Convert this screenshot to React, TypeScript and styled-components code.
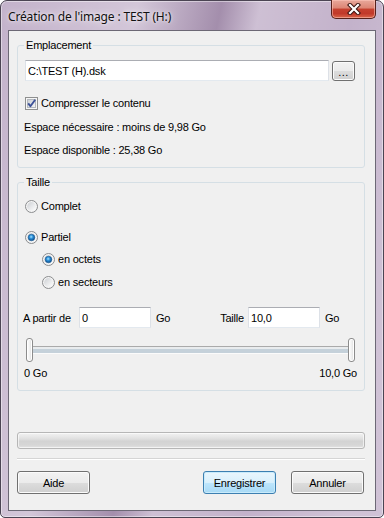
import React from "react";
import styled, { createGlobalStyle } from "styled-components";

const GlobalStyle = createGlobalStyle`
  html, body { margin: 0; padding: 0; background: #ffffff; }
  body { font-family: "Liberation Sans", Arial, sans-serif; font-size: 11px; letter-spacing: -0.2px; color: #000; }
  * { box-sizing: border-box; }
`;

const Window = styled.div`
  width: 384px;
  height: 518px;
  border: 1px solid #4b4453;
  border-radius: 7px 7px 5px 5px;
  background:
    linear-gradient(102deg, rgba(255,255,255,0.05) 0%, rgba(255,255,255,0.3) 28%, rgba(90,60,100,0.28) 45%, rgba(255,255,255,0.22) 53%, rgba(255,255,255,0.05) 72%, rgba(255,255,255,0.25) 92%),
    #c0aec8;
  box-shadow: inset 0 0 0 1px rgba(255,255,255,0.45);
  padding: 0 7px 6px 7px;
  display: flex;
  flex-direction: column;
`;

const TitleBar = styled.div`
  height: 29px;
  display: flex;
  align-items: flex-start;
`;

const Title = styled.div`
  align-self: center;
  font-family: "Noto Sans", "Open Sans", sans-serif;
  font-size: 12px;
  letter-spacing: -0.15px;
  color: #111;
  text-shadow: 0 0 8px rgba(255,255,255,0.95), 0 0 3px rgba(255,255,255,0.8);
  margin-top: 1px;
`;

const Spacer = styled.div`
  flex: 1;
`;

const CloseButton = styled.div`
  width: 45px;
  height: 19px;
  margin-top: -1px;
  border: 1px solid #56211b;
  border-top: none;
  border-radius: 0 0 5px 5px;
  background: linear-gradient(to bottom, #e8a89b 0%, #dc8574 45%, #c5412f 50%, #c1392a 75%, #d9654a 100%);
  box-shadow: inset 0 0 0 1px rgba(255,200,190,0.55);
  display: flex;
  align-items: center;
  justify-content: center;
`;

const Client = styled.div`
  height: 481px;
  border: 1px solid #6c6875;
  background: #f0f0f0;
  padding: 0 10px 0 8px;
  display: flex;
  flex-direction: column;
`;

const Group = styled.fieldset<{ $mt: number }>`
  margin: ${(p) => p.$mt}px 0 0 0;
  padding: 0 7px 10px 7px;
  border: 1px solid #d5dfe5;
  border-radius: 3px;
  min-width: 0;
  display: flex;
  flex-direction: column;
  align-items: flex-start;
`;

const Legend = styled.legend`
  padding: 0 2px;
  margin-left: -1px;
  line-height: 14px;
  height: 14px;
  color: #000;
`;

const PathRow = styled.div`
  margin-top: 8px;
  display: flex;
  align-items: center;
  gap: 3px;
  align-self: stretch;
`;

const TextField = styled.input<{ $w: number }>`
  width: ${(p) => p.$w}px;
  height: 21px;
  margin: 0;
  padding: 0 2px;
  border: 1px solid #dde1e7;
  border-top-color: #abadb3;
  border-bottom-color: #e3e9ef;
  background: #ffffff;
  font-family: "Liberation Sans", Arial, sans-serif;
  font-size: 11px;
  letter-spacing: -0.2px;
  color: #000;
  outline: none;
`;

const PushButton = styled.button<{ $w: number; $h: number; $default?: boolean }>`
  width: ${(p) => p.$w}px;
  height: ${(p) => p.$h}px;
  margin: 0;
  padding: 0;
  border: 1px solid ${(p) => (p.$default ? "#3c7fb1" : "#707070")};
  border-radius: 3px;
  background: ${(p) =>
    p.$default
      ? "linear-gradient(to bottom, #eaf6fd 0%, #d9f0fc 50%, #bee6fd 50%, #a7d9f5 100%)"
      : "linear-gradient(to bottom, #f2f2f2 0%, #ebebeb 50%, #dddddd 50%, #cfcfcf 100%)"};
  box-shadow: inset 0 0 0 1px ${(p) => (p.$default ? "#c9ebfb" : "#fbfbfb")};
  font-family: "Liberation Sans", Arial, sans-serif;
  font-size: 11px;
  letter-spacing: -0.2px;
  color: #000;
  display: flex;
  align-items: center;
  justify-content: center;
`;

const Dots = styled.span`
  font-size: 11px;
  letter-spacing: 0.5px;
  margin-top: 3px;
`;

const OptionRow = styled.div<{ $mt: number; $indent?: number }>`
  margin-top: ${(p) => p.$mt}px;
  margin-left: ${(p) => p.$indent || 0}px;
  height: 13px;
  display: flex;
  align-items: center;
  gap: 3px;
  line-height: 13px;
`;

const Info = styled.div<{ $mt: number }>`
  margin-top: ${(p) => p.$mt}px;
  margin-left: -1px;
  line-height: 14px;
`;

const RangeRow = styled.div`
  margin-top: 18px;
  margin-left: -2px;
  align-self: stretch;
  display: flex;
  align-items: center;
  line-height: 14px;
`;

const FieldLabel = styled.span<{ $w?: number }>`
  ${(p) => (p.$w ? `width: ${p.$w}px;` : "margin-right: 4px;")}
  flex-shrink: 0;
`;

const Unit = styled.span<{ $grow?: boolean }>`
  padding-left: 5px;
  ${(p) => (p.$grow ? "flex: 1;" : "width: 37px;")}
`;

const Slider = styled.div`
  margin: 10px 2px 0 1px;
  align-self: stretch;
  height: 24px;
  display: flex;
  align-items: center;
`;

const Thumb = styled.div`
  width: 7px;
  height: 24px;
  border: 1px solid #8c8c8c;
  border-radius: 3px;
  background: linear-gradient(to right, #ffffff 0%, #f1f1f1 50%, #dcdcdc 100%);
  box-shadow: inset 0 0 0 1px #ffffff;
`;

const Track = styled.div`
  flex: 1;
  height: 8px;
  margin-top: -1px;
  background: linear-gradient(to bottom, #aaaaaa 0px, #aaaaaa 1px, #e9ecee 1px, #e9ecee 3px, #c5d1da 3px, #c5d1da 7px, #fbfbfb 7px, #fbfbfb 8px);
`;

const ScaleRow = styled.div`
  margin: 4px 0 0 -1px;
  align-self: stretch;
  display: flex;
  justify-content: space-between;
  line-height: 14px;
`;

const Progress = styled.div`
  margin-top: 41px;
  height: 17px;
  border: 1px solid #b6b6b6;
  border-radius: 3px;
  background: linear-gradient(to bottom, #f2f2f2 0%, #e2e2e2 35%, #d3d3d3 55%, #d6d6d6 80%, #e2e2e2 100%);
  box-shadow: inset 0 0 0 1px rgba(255,255,255,0.6);
`;

const Separator = styled.div`
  margin-top: 9px;
  height: 1px;
  background: #d5d5d5;
  box-shadow: 0 1px 0 #ffffff;
`;

const ButtonRow = styled.div`
  margin-top: 12px;
  display: flex;
  align-items: center;
  padding-right: 1px;
`;

const ButtonGap = styled.div`
  width: 15px;
`;

const CloseGlyph = () => (
  <svg width="14" height="12" viewBox="0 0 14 12">
    <path d="M3 2 L11 10 M11 2 L3 10" stroke="#3a1410" strokeWidth="4.2" strokeLinecap="square" fill="none" />
    <path d="M3 2 L11 10 M11 2 L3 10" stroke="#ffffff" strokeWidth="2.2" strokeLinecap="square" fill="none" />
  </svg>
);

const CheckBox = () => (
  <svg width="13" height="13" viewBox="0 0 13 13">
    <defs>
      <linearGradient id="cbg" x1="0" y1="0" x2="1" y2="1">
        <stop offset="0" stopColor="#cbcfd5" />
        <stop offset="1" stopColor="#f6f6f6" />
      </linearGradient>
    </defs>
    <rect x="0.5" y="0.5" width="12" height="12" fill="#f6f6f6" stroke="#8e8f8f" />
    <rect x="2.5" y="2.5" width="8" height="8" fill="url(#cbg)" stroke="#b4b8be" />
    <path d="M3.2 6.4 L5.4 9.2 L10.2 2.8" stroke="#3c5198" strokeWidth="1.9" fill="none" strokeLinejoin="round" />
  </svg>
);

const Radio = ({ checked, id }: { checked?: boolean; id: string }) => (
  <svg width="13" height="13" viewBox="0 0 13 13">
    <defs>
      <linearGradient id={`rb-${id}`} x1="0" y1="0" x2="1" y2="1">
        <stop offset="0" stopColor="#cdd0d4" />
        <stop offset="1" stopColor="#ffffff" />
      </linearGradient>
      <radialGradient id={`rd-${id}`} cx="0.45" cy="0.4" r="0.6">
        <stop offset="0" stopColor="#a6e4ff" />
        <stop offset="0.45" stopColor="#2b8fd8" />
        <stop offset="1" stopColor="#0c4a86" />
      </radialGradient>
    </defs>
    <circle cx="6.5" cy="6.5" r="6" fill="#f4f4f4" stroke="#8a8c8e" />
    <circle cx="6.5" cy="6.5" r="4.4" fill={`url(#rb-${id})`} />
    {checked && <circle cx="6.5" cy="6.5" r="3.3" fill={`url(#rd-${id})`} stroke="#1b5d95" strokeWidth="0.6" />}
  </svg>
);

export default function App() {
  return (
    <>
      <GlobalStyle />
      <Window>
        <TitleBar>
          <Title>Création de l'image : TEST (H:)</Title>
          <Spacer />
          <CloseButton>
            <CloseGlyph />
          </CloseButton>
        </TitleBar>
        <Client>
          <Group $mt={7}>
            <Legend>Emplacement</Legend>
            <PathRow>
              <TextField $w={304} readOnly value="C:\TEST (H).dsk" />
              <PushButton $w={23} $h={20}>
                <Dots>...</Dots>
              </PushButton>
            </PathRow>
            <OptionRow $mt={16}>
              <CheckBox />
              <span>Compresser le contenu</span>
            </OptionRow>
            <Info $mt={10}>Espace nécessaire : moins de 9,98 Go</Info>
            <Info $mt={9}>Espace disponible : 25,38 Go</Info>
          </Group>

          <Group $mt={7}>
            <Legend>Taille</Legend>
            <OptionRow $mt={11}>
              <Radio id="a" />
              <span>Complet</span>
            </OptionRow>
            <OptionRow $mt={18}>
              <Radio id="b" checked />
              <span>Partiel</span>
            </OptionRow>
            <OptionRow $mt={9} $indent={17}>
              <Radio id="c" checked />
              <span>en octets</span>
            </OptionRow>
            <OptionRow $mt={10} $indent={17}>
              <Radio id="d" />
              <span>en secteurs</span>
            </OptionRow>
            <RangeRow>
              <FieldLabel $w={56}>A partir de</FieldLabel>
              <TextField $w={72} readOnly value="0" />
              <Unit $grow>Go</Unit>
              <FieldLabel>Taille</FieldLabel>
              <TextField $w={72} readOnly value="10,0" />
              <Unit>Go</Unit>
            </RangeRow>
            <Slider>
              <Thumb />
              <Track />
              <Thumb />
            </Slider>
            <ScaleRow>
              <span>0 Go</span>
              <span>10,0 Go</span>
            </ScaleRow>
          </Group>

          <Progress />
          <Separator />
          <ButtonRow>
            <PushButton $w={73} $h={23}>Aide</PushButton>
            <Spacer />
            <PushButton $w={73} $h={23} $default>Enregistrer</PushButton>
            <ButtonGap />
            <PushButton $w={73} $h={23}>Annuler</PushButton>
          </ButtonRow>
        </Client>
      </Window>
    </>
  );
}
